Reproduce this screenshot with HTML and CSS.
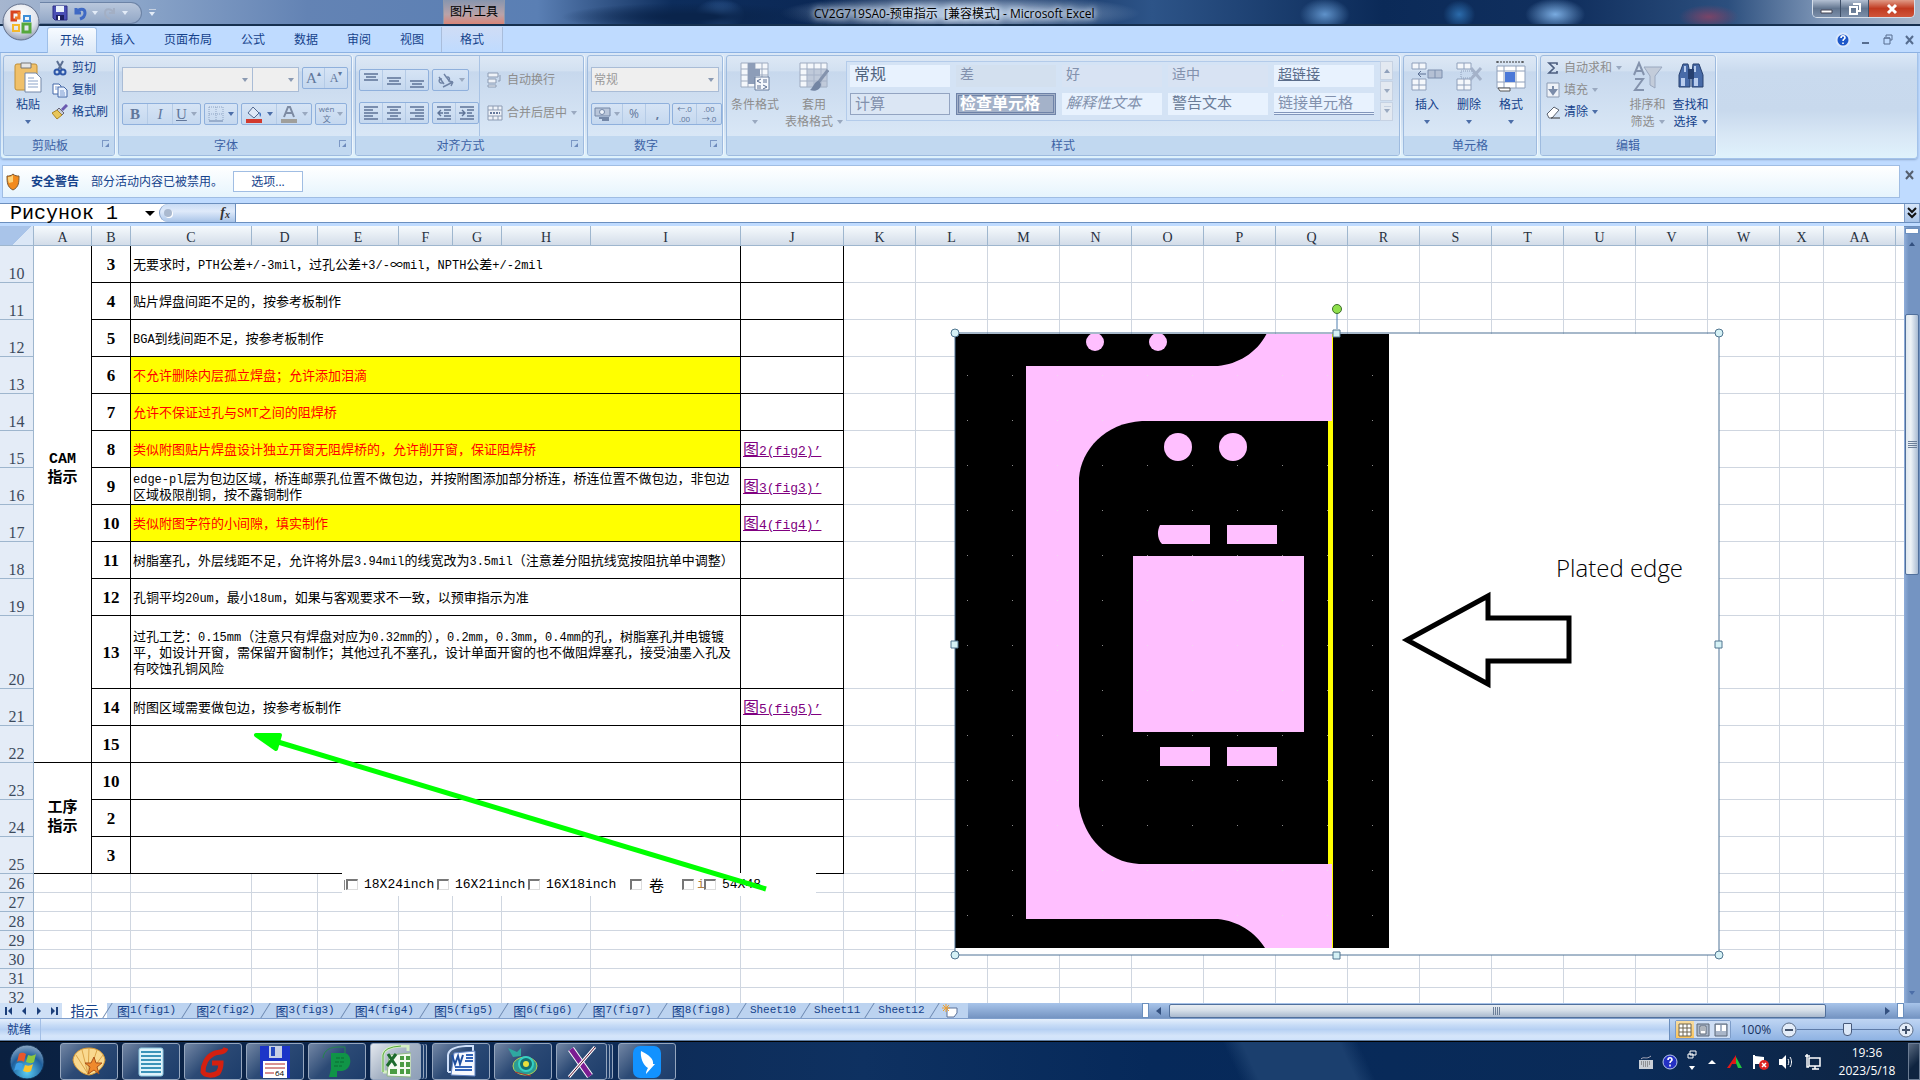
FILE: index.html
```html
<!DOCTYPE html>
<html lang="zh-CN">
<head>
<meta charset="utf-8">
<title>CV2G719SA0-预审指示 [兼容模式] - Microsoft Excel</title>
<link rel="stylesheet" href="styles.css">
</head>
<body>
<header class="titlebar">
  <div class="qat">
    <button aria-label="保存"><svg width="16" height="16"><path d="M1 1h14v14H3l-2-2z" fill="#4a4fb5" stroke="#2c2f86"/><path d="M4 1h8v6H4z" fill="#e8f0fb"/><path d="M4 10h8v5H4z" fill="#1d2060"/><path d="M6 11h2v4H6z" fill="#fff"/></svg></button>
    <button class="undo" aria-label="撤消"><svg width="14" height="16"><path d="M3 3v5h5M3 8c3-5 9-5 9 0 0 3-2 5-5 6" fill="none" stroke="#3f69c4" stroke-width="3"/></svg></button>
    <i class="tri pale"></i>
    <button class="redo" aria-label="恢复" disabled><svg width="14" height="16"><path d="M11 3v5H6M11 8c-3-5-9-5-9 0 0 3 2 5 5 6" fill="none" stroke="#a3afc4" stroke-width="2"/></svg></button>
    <i class="tri pale"></i>
  </div>
  <button class="qat-more" aria-label="自定义"><i class="tri pale bar"></i></button>
  <div class="context-title">图片工具</div>
  <h1>CV2G719SA0-预审指示&nbsp; [兼容模式] - Microsoft Excel</h1>
  <div class="winbtns">
    <button aria-label="最小化"><svg width="14" height="12"><path d="M1 7h11v3H1z" fill="#fff" stroke="#445"/></svg></button><button aria-label="还原"><svg width="14" height="12"><path d="M5 1h7v7h-2M2 4h7v7H2z" fill="none" stroke="#fff" stroke-width="2"/></svg></button><button class="close" aria-label="关闭"><svg width="14" height="12"><path d="M3 2l8 8M11 2l-8 8" stroke="#fff" stroke-width="3"/></svg></button>
  </div>
  <button class="office" aria-label="Office 按钮"><svg width="40" height="40" viewBox="0 0 40 40"><defs><radialGradient id="ob" cx=".5" cy=".3" r=".75"><stop offset="0" stop-color="#fff"/><stop offset=".6" stop-color="#dfe3ec"/><stop offset="1" stop-color="#8793ab"/></radialGradient></defs><circle cx="20" cy="20" r="18" fill="url(#ob)" stroke="#63718d"/><g fill="none" stroke-width="3"><path d="M18 12v-2h-7v8h5" stroke="#d8421e"/><path d="M18 10v6h-4" stroke="#ef7a26"/><path d="M23 14h6v5h-6z" stroke="#3f8fd8" stroke-width="2"/><path d="M12 23h6v6h-6z" stroke="#f5b82a" stroke-width="2"/><path d="M22 22h7v8h-7z" stroke="#55a83c"/></g></svg></button>
</header>

<nav class="tabs">
  <button class="tab on">开始</button><button class="tab">插入</button><button class="tab">页面布局</button><button class="tab">公式</button><button class="tab">数据</button><button class="tab">审阅</button><button class="tab">视图</button><button class="tab ctx">格式</button>
  <div class="docbtns">
    <button aria-label="帮助"><svg width="16" height="16"><circle cx="8" cy="8" r="6.5" fill="#1d57c8" stroke="#d9e7fb" stroke-width="2"/><path d="M6 6c0-3 4-3 4 0 0 1-2 1-2 3M8 10.500v1.500" stroke="#fff" stroke-width="1.600" fill="none"/></svg></button>
    <button aria-label="最小化窗口"><svg width="10" height="12"><path d="M1 9h7" stroke="#566d8f" stroke-width="2"/></svg></button>
    <button aria-label="还原窗口"><svg width="10" height="12"><path d="M3 3V1h6v5H7M1 4h6v6H1zM1 4h6" fill="none" stroke="#566d8f"/></svg></button>
    <button aria-label="关闭窗口"><svg width="10" height="12"><path d="M1 2l7 8M8 2l-7 8" stroke="#566d8f" stroke-width="2"/></svg></button>
  </div>
</nav>

<section class="ribbon">
  <div class="group g-clip">
    <div class="body">
      <button class="big"><svg width="28" height="32"><rect x="1" y="3" width="22" height="26" rx="2" fill="#f0c069" stroke="#c08f36"/><path d="M7 2h10v5H7z" fill="#e6e6e6" stroke="#777"/><path d="M11 12h11l5 5v14H11z" fill="#fff" stroke="#7488a8"/><path d="M14 17h6M14 20h10M14 23h10M14 26h10" stroke="#8ba3c8"/></svg><span>粘贴</span><i class="tri"></i></button>
      <div class="stack">
        <button class="item"><svg width="16" height="16"><path d="M5 1l5 9M11 1L6 10" stroke="#5b6f92" stroke-width="2"/><circle cx="5" cy="12" r="2.500" fill="none" stroke="#2d56a8" stroke-width="2"/><circle cx="11" cy="12" r="2.500" fill="none" stroke="#2d56a8" stroke-width="2"/></svg>剪切</button>
        <button class="item"><svg width="16" height="16"><path d="M1 2h6l2 2v8H1z" fill="#fff" stroke="#4569a8"/><path d="M6 5h6l3 3v7H6z" fill="#e8f1fd" stroke="#4569a8"/><path d="M3 5h3M3 7h3M8 9h4M8 11h5M8 13h5" stroke="#7a9ad0"/></svg>复制</button>
        <button class="item"><svg width="16" height="16"><path d="M15 1l-5 5" stroke="#6a5ab0" stroke-width="3"/><path d="M7 4l5 5-2 2-5-5z" fill="#c6cbd8" stroke="#667"/><path d="M5 6l5 5-5 4-5-6z" fill="#e8c65a" stroke="#a98426"/></svg>格式刷</button>
      </div>
    </div>
    <footer class="has-launch">剪贴板<i class="launch"></i></footer>
  </div>

  <div class="group g-font">
    <div class="body rows">
      <div class="row">
        <div class="combo c-font"><select aria-label="字体" disabled><option></option></select></div><div class="combo c-size"><select aria-label="字号" disabled><option></option></select></div>
        <div class="seg push"><button class="ser">A<sup>▴</sup></button><button class="ser sm">A<sup>▾</sup></button></div>
      </div>
      <div class="row">
        <div class="seg"><button class="ser"><b>B</b></button><button class="ser"><em>I</em></button><button class="ser"><u>U</u><i class="tri dim"></i></button></div>
        <div class="seg"><button aria-label="边框"><svg width="16" height="16"><path d="M1 1h14v14M1 1v14M8 1v14M1 8h14" fill="none" stroke="#8ea4c4" stroke-dasharray="1 1"/><path d="M1 15h14" stroke="#6b82a8"/></svg><i class="tri"></i></button></div>
        <div class="seg"><button aria-label="填充颜色"><svg width="18" height="18"><path d="M8 2l6 6-5 5-6-5z" fill="#dfe9f8" stroke="#53698f"/><path d="M14 7c3 1 2 4 1 5z" fill="#3a6ec0"/><path d="M1 14h16v4H1z" fill="#d23a2e"/></svg><i class="tri"></i></button><button aria-label="字体颜色"><svg width="18" height="18"><path d="M4 12l4-10h2l4 10M6 8h6" fill="none" stroke="#7d8ba3" stroke-width="2"/><path d="M1 14h16v4H1z" fill="#a09f9b"/></svg><i class="tri dim"></i></button></div>
        <div class="seg"><button class="wen"><span>wén<br>文</span><i class="tri dim"></i></button></div>
      </div>
    </div>
    <footer class="has-launch">字体<i class="launch dim"></i></footer>
  </div>

  <div class="group g-align">
    <div class="body">
      <div class="rows">
        <div class="row">
          <div class="seg"><button aria-label="顶端对齐"><svg width="16" height="16"><path d="M1 2h14M3 5h10M1 8h14" stroke="#5e7396" stroke-width="1.500"/></svg></button><button aria-label="垂直居中"><svg width="16" height="16"><path d="M1 6h14M3 9h10M1 12h14" stroke="#5e7396" stroke-width="1.500"/></svg></button><button aria-label="底端对齐"><svg width="16" height="16"><path d="M1 9h14M3 12h10M1 15h14" stroke="#5e7396" stroke-width="1.500"/></svg></button></div>
          <div class="seg"><button class="ori" aria-label="方向"><svg width="18" height="16"><path d="M2 5l5 7M5 7c-4-1-4 5 1 4M7 2l6 8M9 6c3-3 5 2 2 3M6 15l10-5M16 10l-4-1M16 10l-2 4" fill="none" stroke="#6f83a5" stroke-width="1.400"/></svg><i class="tri dim"></i></button></div>
        </div>
        <div class="row">
          <div class="seg"><button aria-label="左对齐"><svg width="16" height="16"><path d="M1 2h14M1 5h9M1 8h14M1 11h9M1 14h14" stroke="#5e7396" stroke-width="1.500"/></svg></button><button aria-label="居中"><svg width="16" height="16"><path d="M1 2h14M4 5h8M1 8h14M4 11h8M1 14h14" stroke="#5e7396" stroke-width="1.500"/></svg></button><button aria-label="右对齐"><svg width="16" height="16"><path d="M1 2h14M6 5h9M1 8h14M6 11h9M1 14h14" stroke="#5e7396" stroke-width="1.500"/></svg></button></div>
          <div class="seg"><button aria-label="减少缩进量"><svg width="16" height="16"><path d="M1 2h14M8 5h7M8 8h5M8 11h7M1 14h14M5 5L2 8l3 3M2 8h5" fill="none" stroke="#5e7396" stroke-width="1.400"/></svg></button><button aria-label="增加缩进量"><svg width="16" height="16"><path d="M1 2h14M8 5h7M8 8h5M8 11h7M1 14h14M3 5l3 3-3 3M0 8h6" fill="none" stroke="#5e7396" stroke-width="1.400"/></svg></button></div>
        </div>
      </div>
      <div class="wrapcol">
        <button class="item off"><svg width="16" height="16"><path d="M1 1h10v4H1zM1 7h8v4H1zM1 13h8v2H1z" fill="#eef2f8" stroke="#8c9bb3"/><path d="M13 3v6h-2" fill="none" stroke="#8c9bb3"/></svg>自动换行</button>
        <button class="item off"><svg width="16" height="16"><path d="M1 1h14v14H1zM1 5h14M1 11h14M6 1v4M11 1v4M6 11v4M11 11v4" fill="#eef2f8" stroke="#8c9bb3"/><path d="M3 8h10" stroke="#66799c" stroke-width="2" stroke-dasharray="2 1"/></svg>合并后居中<i class="tri dim"></i></button>
      </div>
    </div>
    <footer class="has-launch">对齐方式<i class="launch dim"></i></footer>
  </div>

  <div class="group g-num">
    <div class="body rows">
      <div class="row"><div class="combo c-fmt"><select aria-label="数字格式" disabled><option>常规</option></select></div></div>
      <div class="row">
        <div class="seg"><button aria-label="会计数字格式"><svg width="18" height="16"><path d="M1 2h15v8H1z" fill="#b9c6da" stroke="#7488a8"/><circle cx="8" cy="6" r="2.500" fill="#eef3fa" stroke="#7488a8"/><path d="M5 12h10M8 14h7" stroke="#7488a8" stroke-width="2"/></svg><i class="tri dim"></i></button><button>%</button><button><b>,</b></button></div>
        <div class="seg tiny"><button>←.0<br>.00</button><button>.00<br>→.0</button></div>
      </div>
    </div>
    <footer class="has-launch">数字<i class="launch dim"></i></footer>
  </div>

  <div class="group g-style">
    <div class="body">
      <button class="big off"><svg width="30" height="32"><path d="M1 2h27v24H1zM1 8h27M1 14h27M1 20h27M8 2v24M15 2v24M22 2v24" fill="#f4f7fb" stroke="#9eabc0"/><path d="M8 2h7v6h5v7h-5v8H8z" fill="#8d9db8"/><path d="M15 16h14v13H15z" fill="#f6f8fc" stroke="#6b7e9e"/><path d="M21 18l-4 2 4 2M23 19h4M23 21h4M17 25h4M17 27h4M23 24l4 2-4 2" fill="none" stroke="#5b6f92"/></svg><span>条件格式</span><i class="tri dim"></i></button>
      <button class="big off"><svg width="30" height="32"><path d="M1 2h27v24H1zM1 8h27M1 14h27M1 20h27M8 2v24M15 2v24M22 2v24" fill="#f4f7fb" stroke="#9eabc0"/><path d="M8 8h20v18H8z" fill="#aab7cc" opacity=".7"/><path d="M29 9L19 22" stroke="#8493ad" stroke-width="3"/><path d="M20 20c-5 0-5 6-9 9 5 2 11 0 11-6z" fill="#7385a3"/></svg><span>套用<br>表格格式<i class="tri dim"></i></span></button>
      <div class="gallery">
        <button class="sty s-normal">常规</button><button class="sty s-bad">差</button><button class="sty s-good">好</button><button class="sty s-neutral">适中</button><button class="sty s-link">超链接</button>
        <button class="sty s-calc">计算</button><button class="sty s-check">检查单元格</button><button class="sty s-note">解释性文本</button><button class="sty s-warn">警告文本</button><button class="sty s-linked">链接单元格</button>
      </div>
      <div class="galbtns"><button aria-label="上一行"><i class="tri up dim"></i></button><button aria-label="下一行"><i class="tri dim"></i></button><button aria-label="其他"><i class="tri bar dim"></i></button></div>
    </div>
    <footer>样式</footer>
  </div>

  <div class="group g-cells">
    <div class="body">
      <button class="big"><svg width="32" height="32"><path d="M1 2h14v6H1zM8 2v6M1 18h14v11H1zM8 18v11M1 24h14" fill="#f4f7fb" stroke="#8fa0bb"/><path d="M17 9h14v8H17zM24 9v8" fill="#b4c0d4" stroke="#7d8fae"/><path d="M15 13H7M10 10l-3 3 3 3" fill="none" stroke="#5b6f92"/></svg><span>插入</span><i class="tri"></i></button>
      <button class="big"><svg width="32" height="32"><path d="M4 2h14v6H4zM11 2v6M4 18h14v11H4zM11 18v11M4 24h14" fill="#f4f7fb" stroke="#8fa0bb"/><path d="M8 10h12v7H8z" fill="none" stroke="#8fa0bb" stroke-dasharray="1 1"/><path d="M18 7l10 12M28 7L17 19" stroke="#a4b2c9" stroke-width="3"/></svg><span>删除</span><i class="tri"></i></button>
      <button class="big"><svg width="32" height="32"><path d="M2 1h26M2 0v3M28 0v3" stroke="#333" stroke-dasharray="2 1"/><path d="M2 5h28v22H2zM2 10h28M2 21h28M9 5v22M21 5v22" fill="#fff" stroke="#8fa0bb"/><path d="M10 11h10v10H10z" fill="#4a78d8"/><path d="M3 27h12v3H5z" fill="#fff" stroke="#555"/></svg><span>格式</span><i class="tri"></i></button>
    </div>
    <footer>单元格</footer>
  </div>

  <div class="group g-edit">
    <div class="body">
      <div class="stack">
        <button class="item off"><svg width="14" height="16"><path d="M11 5V3H3l5 5-5 5h8v-2" fill="none" stroke="#4d5f80" stroke-width="1.700"/></svg>自动求和<i class="tri dim"></i></button>
        <button class="item off"><svg width="14" height="16"><path d="M1 1h12v14H1z" fill="#eef2f8" stroke="#8c9bb3"/><path d="M7 4v6M4 8l3 4 3-4z" fill="#7b8ca9" stroke="#7b8ca9" stroke-width="2"/></svg>填充<i class="tri dim"></i></button>
        <button class="item"><svg width="14" height="16"><path d="M1 10l7-7 5 3-7 8H3z" fill="#fff" stroke="#5a6270"/><path d="M5 14h9" stroke="#333"/></svg>清除<i class="tri"></i></button>
      </div>
      <button class="big off"><svg width="30" height="32"><path d="M1 14L6 2l5 12M3 10h7M2 18h8L2 29h9" fill="none" stroke="#8493ad" stroke-width="2"/><path d="M11 6h18l-7 9v12l-5-3v-9z" fill="#c3ccda" stroke="#9aa8bf"/></svg><span>排序和<br>筛选<i class="tri dim"></i></span></button>
      <button class="big"><svg width="30" height="32"><path d="M7 3h5l2 9v14H3V14zM17 3h6l4 11v12H16V12z" fill="#486ba8" stroke="#27406f"/><path d="M12 8h6v10h-6z" fill="#27406f"/><path d="M5 17h4v8H5zM18 17h4v8h-4zM8 5h2v6H8zM18 5h2v6h-2z" fill="#b9cdee"/></svg><span>查找和<br>选择<i class="tri"></i></span></button>
    </div>
    <footer>编辑</footer>
  </div>
</section>

<section class="warning">
  <div class="msg"><svg width="14" height="18"><path d="M7 1c2 2 4 2 6 2 0 6 0 11-6 14C1 14 1 9 1 3c2 0 4 0 6-2z" fill="#f28a1c" stroke="#7b5a35"/><path d="M7 2C5 4 3 4 2 4c0 2 0 4 1 6l4-1z" fill="#fbd27a"/></svg><strong>安全警告</strong><span>部分活动内容已被禁用。</span><button>选项...</button></div>
  <button class="dismiss" aria-label="关闭消息"><svg width="10" height="12"><path d="M1 2l7 8M8 2l-7 8" stroke="#56606f" stroke-width="2"/></svg></button>
</section>

<section class="formula">
  <input class="name" aria-label="名称框" value="Рисунок 1"><i class="tri black"></i>
  <div class="pill"><i class="knob"></i><button class="fx" aria-label="插入函数">f<sub>x</sub></button></div>
  <input class="fbar" aria-label="编辑栏">
  <button class="expand" aria-label="展开编辑栏"><svg width="10" height="14"><path d="M1 2l4 4 4-4M1 7l4 4 4-4" fill="none" stroke="#111" stroke-width="2"/></svg></button>
</section>

<main class="workspace">
  <div class="sheet">
    <table class="grid"><colgroup id="cols"></colgroup><thead><tr id="heads"></tr></thead><tbody id="rows"></tbody></table>
    <div class="options">
      <label><input type="checkbox">18X24inch</label><label><input type="checkbox">16X21inch</label><label><input type="checkbox">16X18inch</label><label><input type="checkbox"><b class="han">卷</b></label><label class="cut"><input type="checkbox">i</label><label><input type="checkbox">54X48</label>
    </div>
    <svg class="drawing">
      <defs>
        <pattern id="dots" x="967" y="375" width="45" height="45" patternUnits="userSpaceOnUse"><rect width="1" height="1" fill="#e8e8e8" opacity=".6"/></pattern>
        <clipPath id="pic"><rect x="955" y="334" width="434" height="614"/></clipPath>
      </defs>
      <g transform="translate(0 -226)">
        <path d="M278 742L766 889" stroke="#0f0" stroke-width="5"/><path d="M256 735h24l-4 14z" fill="#0f0" stroke="#0f0" stroke-width="4" stroke-linejoin="round"/>
        <rect x="955" y="334" width="764" height="621" fill="#fff"/>
        <g clip-path="url(#pic)">
          <rect x="955" y="334" width="434" height="614" fill="#000"/>
          <path d="M1026 366H1218C1238 364 1257 353 1267 333H1333V948H1265C1255 932 1238 921 1218 919H1026z" fill="#ffbfff"/>
          <path d="M1328 421H1142C1105 423 1081 450 1079 478V806C1084 838 1107 862 1139 864H1328z" fill="#000"/>
          <path d="M1328 421h5v443h-5zM1332 334h1v614h-1z" fill="#ff0"/>
          <g fill="#ffbfff"><circle cx="1095" cy="342" r="9"/><circle cx="1158" cy="342" r="9"/><circle cx="1178" cy="447" r="14"/><circle cx="1233" cy="447" r="14"/>
          <path d="M1160 525h50v19h-48c-5-5-5-13-2-19zM1227 525h50v19h-50zM1133 556h171v176h-171zM1160 747h50v19h-50zM1227 747h50v19h-50z"/></g>
          <rect x="955" y="370" width="434" height="560" fill="url(#dots)"/>
        </g>
        <path d="M1407 640L1488 596V618H1569V661H1488V684z" fill="#fff" stroke="#000" stroke-width="5"/>
        <text x="1556" y="577">Plated edge</text>
        <rect x="955" y="333" width="764" height="622" fill="none" stroke="#4f7396"/>
        <path d="M1337 313v16" stroke="#4f7fb0"/>
        <g fill="#d5f1f5" stroke="#50758f"><circle cx="955" cy="333" r="4"/><circle cx="1719" cy="333" r="4"/><circle cx="955" cy="955" r="4"/><circle cx="1719" cy="955" r="4"/><path d="M1333 330h7v7h-7zM1333 952h7v7h-7zM951 641h7v7h-7zM1715 641h7v7h-7z"/></g>
        <circle cx="1337" cy="309" r="4.500" fill="#8fe04c" stroke="#3f6f2c"/>
      </g>
    </svg>
  </div>
  <div class="vscroll"><i class="split"></i><button aria-label="向上"><i class="tri up"></i></button><div class="thumb"><i></i></div><button class="end" aria-label="向下"><i class="tri"></i></button></div>
</main>

<section class="sheettabs">
  <div class="nav"><button aria-label="第一张"><svg width="8" height="10"><path d="M1 1v8" stroke="#1c3f7a" stroke-width="2"/><path d="M7 1v8L3 5z" fill="#1c3f7a"/></svg></button><button aria-label="上一张"><svg width="8" height="10"><path d="M6 1v8L2 5z" fill="#1c3f7a"/></svg></button><button aria-label="下一张"><svg width="8" height="10"><path d="M2 1v8l4-4z" fill="#1c3f7a"/></svg></button><button aria-label="最后一张"><svg width="8" height="10"><path d="M7 1v8" stroke="#1c3f7a" stroke-width="2"/><path d="M1 1v8l4-4z" fill="#1c3f7a"/></svg></button></div>
  <button class="st on">指示</button><button class="st"><span class="han">图</span>1(fig1)</button><button class="st"><span class="han">图</span>2(fig2)</button><button class="st"><span class="han">图</span>3(fig3)</button><button class="st"><span class="han">图</span>4(fig4)</button><button class="st"><span class="han">图</span>5(fig5)</button><button class="st"><span class="han">图</span>6(fig6)</button><button class="st"><span class="han">图</span>7(fig7)</button><button class="st"><span class="han">图</span>8(fig8)</button><button class="st w">Sheet10</button><button class="st w">Sheet11</button><button class="st w">Sheet12</button><button class="st new" aria-label="插入工作表"><svg width="18" height="14"><path d="M5 4h10v5l-3 4H5z" fill="#fff" stroke="#5a7199"/><path d="M4 0v8M0 4h8M1 1l6 6M7 1L1 7" stroke="#f0a030"/></svg></button>
  <div class="hscroll"><i class="split"></i><button aria-label="向左"><i class="tri left"></i></button><div class="thumb"><i></i></div><button class="end" aria-label="向右"><i class="tri right"></i></button><i class="split"></i></div>
</section>

<section class="status">
  <span class="ready">就绪</span>
  <div class="viewbar">
    <div class="views"><button class="on" aria-label="普通"><svg width="14" height="14"><path d="M1 1h12v12H1zM1 5h12M1 9h12M5 1v12M9 1v12" fill="#fff" stroke="#6c6450"/></svg></button><button aria-label="页面布局"><svg width="14" height="14"><path d="M1 1h12v12H1z" fill="#a9b6c9" stroke="#5d6879"/><path d="M4 3h6v8H4z" fill="#fff" stroke="#5d6879"/><path d="M5 5h4M5 7h4" stroke="#5d6879"/></svg></button><button aria-label="分页预览"><svg width="14" height="14"><path d="M1 1h12v12H1z" fill="#a9b6c9" stroke="#5d6879"/><path d="M2 2h4v6H2zM8 2h4v6H8z" fill="#fff"/></svg></button></div>
    <span class="pct">100%</span>
    <button class="zb" aria-label="缩小"><svg width="16" height="16"><circle cx="8" cy="8" r="7" fill="#e3ecf8" stroke="#5b6c86"/><path d="M4 8h8" stroke="#44546d" stroke-width="2"/></svg></button>
    <input type="range" aria-label="显示比例" min="0" max="100" value="50">
    <button class="zb" aria-label="放大"><svg width="16" height="16"><circle cx="8" cy="8" r="7" fill="#e3ecf8" stroke="#5b6c86"/><path d="M4 8h8M8 4v8" stroke="#44546d" stroke-width="2"/></svg></button>
  </div>
</section>

<footer class="taskbar">
  <button class="start" aria-label="开始菜单"><svg width="40" height="38" viewBox="0 0 40 38"><defs><radialGradient id="sb" cx=".5" cy=".8" r=".8"><stop offset="0" stop-color="#5ad0f5"/><stop offset=".6" stop-color="#1f5f9c"/><stop offset="1" stop-color="#8fa9c4"/></radialGradient></defs><circle cx="20" cy="19" r="17" fill="url(#sb)" stroke="#0d2c4f"/><path d="M12 11c3-2 5-1 7 0l-2 8c-2-1-4-2-7 0z" fill="#e8572a"/><path d="M21 12c3 1 5 1 8-1l-2 8c-3 2-5 1-8 0z" fill="#8cc63f"/><path d="M9 21c3-2 5-1 7 0l-2 7c-2-1-4-2-7 0z" fill="#3fa0e8"/><path d="M18 22c3 1 5 1 8-1l-2 7c-3 2-5 1-8 0z" fill="#fbc52d"/></svg></button>
  <button class="app" aria-label="贝壳"><svg width="34" height="30"><path d="M17 28C9 27 2 20 1 13 2 5 9 1 17 1s15 4 16 12c-1 7-8 14-16 15z" fill="#f9d98f" stroke="#d99a35"/><path d="M16 27L4 8M16 27L10 3M16 27L17 1M17 27L25 3M17 27L31 8" stroke="#dca64a"/><path d="M22 10l2 6 6 0-5 4 2 7-5-4-6 4 2-7-5-4h6z" fill="#ef8a2c" stroke="#a8521a"/></svg></button>
  <button class="app" aria-label="记事本"><svg width="26" height="30"><rect x="1" y="1" width="24" height="28" rx="2" fill="#dff3fb" stroke="#8cc8e0"/><path d="M3 5h20M3 9h20M3 13h20M3 17h20M3 21h20M3 25h20" stroke="#3c93b8" stroke-width="2"/></svg></button>
  <button class="app" aria-label="G"><svg width="30" height="32"><path d="M28 2c-2 6-8 3-13 6-6 3-10 10-10 18 2 4 10 4 15 1 2-3 3-7 3-10h-9" fill="none" stroke="#d42010" stroke-width="5"/></svg></button>
  <button class="app" aria-label="磁盘"><svg width="30" height="34"><path d="M0 1h30v32H3l-3-3z" fill="#1c35c8"/><path d="M9 1h13v12H9z" fill="#c7d0e4"/><path d="M11 2h4v9h-4z" fill="#2448c0"/><path d="M3 16h24v17H3z" fill="#fff"/><path d="M5 19h20M5 23h20M5 28h9" stroke="#b02525"/><text x="15" y="31" font-size="8">64</text></svg></button>
  <button class="app" aria-label="P"><svg width="30" height="32"><path d="M1 12C2 4 8 1 17 1h6v6" fill="none" stroke="#23864b"/><path d="M9 7h14c8 2 7 17-3 18h-5v6H7l2-8z" fill="#109447"/><path d="M14 12h8M13 16h9M12 20h8" stroke="#0a6b33" stroke-dasharray="4 1"/></svg></button>
  <button class="app multi active" aria-label="Excel"><svg width="30" height="34"><path d="M2 27V10Q3 2 20 1h7v5M2 27h6" fill="none" stroke="#d4efc4" stroke-width="3"/><path d="M2 27V10Q3 2 20 1" fill="none" stroke="#57a83c"/><path d="M8 10l22-2v24L6 31z" fill="#f4faf0" stroke="#8fb884"/><path d="M19 11h4v4h-4zM25 11h4v4h-4zM19 17h4v5h-4zM25 17h4v5h-4zM9 24h7v5H9zM19 24h4v5h-4zM25 24h4v5h-4z" fill="#4b9c43"/><path d="M7 9l8 12M15 9L6 21" stroke="#1d6b2c" stroke-width="3"/></svg></button>
  <button class="app" aria-label="Word"><svg width="30" height="34"><path d="M2 27V10Q3 2 20 1h7v5M2 27h6" fill="none" stroke="#cfe0fa" stroke-width="2"/><path d="M8 8l21-2v25L5 30z" fill="#f6f9ff" stroke="#5f83c4"/><path d="M6 10l3 9 3-8 2 8 3-9" fill="none" stroke="#1f4f9f" stroke-width="2"/><path d="M20 10h7M20 13h7M19 16h8M9 22h17M9 25h17" stroke="#3264b8" stroke-width="2"/></svg></button>
  <button class="app" aria-label="CAM"><svg width="32" height="32"><ellipse cx="18" cy="20" rx="12" ry="9" fill="#2b9c94" stroke="#b8d050"/><circle cx="19" cy="18" r="7" fill="#156f70" stroke="#35d0c4" stroke-width="2"/><circle cx="19" cy="18" r="3" fill="#e9e03c"/><path d="M1 2l9 4 4-4v8l-8 1z" fill="#2fa8a0"/><path d="M8 26l16 4" stroke="#a33"/></svg></button>
  <button class="app multi" aria-label="X"><svg width="32" height="34"><path d="M5 4l19 27" stroke="#fff" stroke-width="7"/><path d="M5 4l19 27" stroke="#7b1d92" stroke-width="5"/><path d="M29 2L3 32" stroke="#fff" stroke-width="3"/><path d="M29 2L3 32" stroke="#5b1330"/></svg></button>
  <button class="app" aria-label="鸟"><svg width="28" height="32"><rect width="28" height="32" rx="7" fill="#1292ff"/><path d="M8 5c8 4 13 8 12 13h2l-9 10c0-3 1-4 2-6-5-3-8-11-7-17z" fill="#fff"/></svg></button>
  <div class="tray">
    <svg width="16" height="16"><path d="M1 6h14v9H1z" fill="#c9ced6"/><path d="M3 8h10M3 10h10M5 12h6" stroke="#555" stroke-dasharray="1 1"/><path d="M3 5c3-3 5 1 10-3" fill="none" stroke="#aab"/></svg>
    <svg width="16" height="16"><circle cx="8" cy="8" r="7" fill="#2430c4" stroke="#b9c6ef"/><path d="M6 6c0-3 4-3 4 0 0 1-2 1-2 3M8 10.500v2" stroke="#fff" stroke-width="1.600" fill="none"/></svg>
    <svg width="12" height="26"><path d="M4 2h6v4H4zM2 5h5v4H2z" fill="none" stroke="#fff"/><path d="M3 17h6l-3 4z" fill="#fff"/></svg>
    <svg width="12" height="10"><path d="M2 7h8L6 3z" fill="#fff"/></svg>
    <svg width="18" height="16"><path d="M1 14L10 1v9H6l-2 4z" fill="#e01818"/><path d="M10 3l6 11h-4l-2-5z" fill="#22c83c"/></svg>
    <svg width="18" height="18"><path d="M2 2v14" stroke="#fff" stroke-width="2"/><path d="M3 3l9 1v7H3z" fill="#fff"/><circle cx="12" cy="12" r="5" fill="#d22"/><path d="M10 10l4 4M14 10l-4 4" stroke="#fff" stroke-width="1.500"/></svg>
    <svg width="18" height="18"><path d="M1 6h3l4-4v14l-4-4H1z" fill="#fff"/><path d="M10 6c1 2 1 4 0 6M12 4c2 3 2 7 0 10" fill="none" stroke="#fff"/></svg>
    <svg width="18" height="18"><path d="M5 5h11v8H5zM8 16h7M11 13v3M3 1v5M1 3h5M3 6v8h2" fill="none" stroke="#fff" stroke-width="1.500"/></svg>
    <time>19:36<br>2023/5/18</time>
  </div>
  <button class="peek" aria-label="显示桌面"></button>
</footer>
<script src="sheet.js"></script>
</body>
</html>
```
FILE: styles.css
```css
*{box-sizing:border-box}
body{margin:0;height:100vh;display:flex;flex-direction:column;overflow:hidden;background:#bfdbff;font:12px/16px "Open Sans","Noto Sans CJK SC",sans-serif;color:#15428b}
button,input,select{font:inherit;color:inherit;margin:0;padding:0;border:0;background:none;border-radius:0}
button{display:flex;align-items:center;justify-content:center;white-space:nowrap}
svg{display:block;flex:none}
h1{margin:0}
.tri{display:inline-block;flex:none;width:0;height:0;border:3px solid transparent;border-top:4px solid #4c6ea8;border-bottom:0}
.tri.dim{border-top-color:#9aa9c0}
.tri.pale{border-top-color:#e3ecf8}
.tri.black{border-width:5px 5px 0;border-top-color:#000}
.tri.up{border-top:0;border-bottom:4px solid #33507f}
.tri.up.dim{border-bottom-color:#8fa0bb}
.tri.left{border:4px solid transparent;border-right:5px solid #33507f;border-left:0}
.tri.right{border:4px solid transparent;border-left:5px solid #33507f;border-right:0}
.bar{position:relative}
.bar::before{content:"";position:absolute;left:-3px;top:-7px;width:7px;height:1px;background:#c5d0e0}

/* title bar */
.titlebar{flex:none;position:relative;height:26px;display:flex;align-items:flex-start;padding:0 5px 0 40px;border-bottom:2px solid #16304f;background:
 radial-gradient(ellipse 130px 14px at 36% 70%,#0a244b 20%,transparent),
 radial-gradient(ellipse 25px 16px at 37.500% 60%,#3f6fae,transparent),
 radial-gradient(ellipse 180px 20px at 50% 55%,#a9bfdb 20%,transparent),
 radial-gradient(ellipse 25px 16px at 69% 60%,#5f92ca,transparent),
 radial-gradient(ellipse 16px 14px at 76% 60%,#2b6bab,transparent),
 radial-gradient(ellipse 30px 16px at 81% 60%,#79abe0,transparent),
 radial-gradient(ellipse 30px 12px at 89% 70%,#7a4468,transparent),
 linear-gradient(90deg,#a6b6cf 0,#8ba5c9 7%,#6383b4 16%,#5a7fb4 28%,#0d2d5c 35%,#0a2450 50%,#2d5488 60%,#0b2a58 72%,#11305f 82%,#2c4f7e 90%,#7f97b8 95%,#a5b5ca)}
.qat{height:22px;width:102px;margin-top:2px;padding-left:12px;display:flex;align-items:center;gap:5px;border:1px solid #6c83a6;border-left:0;border-radius:0 11px 11px 0;background:linear-gradient(#b9c7dc,#92a7c6)}
.qat-more{margin:12px 0 0 7px}
.context-title{width:62px;height:24px;margin-left:288px;padding-top:4px;text-align:center;color:#000;background:linear-gradient(#8795ae,#b9a3a9 60%,#d98578);border:1px solid #8f98aa;border-width:0 1px}
.titlebar h1{flex:1;font-size:12px;line-height:16px;font-weight:400;color:#000;padding:6px 0 0 302px;margin-left:7px;white-space:nowrap;text-shadow:0 0 5px #e3ecf7,0 0 7px #d7e3f2,0 0 9px #d7e3f2}
.winbtns{display:flex;border:1px solid #d5deea;border-top:0;border-radius:0 0 5px 5px;overflow:hidden}
.winbtns button{width:28px;height:17px;background:linear-gradient(#b3c0d3,#62758f 50%,#7b8ea9);border-right:1px solid #3e4f68}
.winbtns .close{width:45px;border:0;background:linear-gradient(#e09a86,#c13a20 50%,#d0553a)}
.office{position:absolute;left:1px;top:2px;z-index:2}

/* ribbon tabs */
.tabs{flex:none;height:27px;display:flex;align-items:stretch;padding:1px 5px 0 47px;background:#bfdbff;border-bottom:1px solid #8db2e3}
.tab{padding:0 14px;line-height:24px}
.tab:not(.on){margin-right:1px}
.tab.on{padding:0 12px;margin-bottom:-1px;background:linear-gradient(#f7fbff,#dbe8f7);border:1px solid #9ebfe8;border-bottom:0;border-radius:3px 3px 0 0}
.tab.ctx{width:62px;padding:0;margin-left:2px;border:1px solid #a9bddb;border-width:0 1px;background:linear-gradient(#cfdcf5,#bfdbff)}
.docbtns{margin-left:auto;display:flex;align-items:center;gap:12px}
.docbtns button:first-child{margin-right:-2px}

/* ribbon */
.ribbon{flex:none;height:106px;margin:0 2px 0 0;padding:2px 2px;display:flex;gap:3px;border:1px solid #a3c3ea;border-top:0;border-radius:0 0 4px 4px;background:linear-gradient(#dbe8f7,#c9daee 18%,#c8d9ed 55%,#d9e8f6 80%,#dff2fc);box-shadow:0 1px 2px #8da9cf}
.group{flex:none;height:101px;display:flex;flex-direction:column;border:1px solid #9ebbdf;border-radius:3px;background:linear-gradient(#dde8f5,#d2e0f1 15%,#c7d8ed 16%,#d9e7f6 80%);overflow:hidden;box-shadow:1px 0 0 #eff6fd}
.group .body{flex:1;display:flex;min-height:0}
.group footer{height:19px;position:relative;background:#c1d8f0;text-align:center;line-height:19px;color:#3c62a5}
.group .has-launch{padding-right:18px}
.launch{position:absolute;right:5px;top:4px;width:7px;height:7px;border:1px solid #7c98c5;border-width:1px 0 0 1px}
.launch::after{content:"";position:absolute;right:0;bottom:0;border:2px solid #6d8abb;border-top-color:transparent;border-left-color:transparent}
.g-clip{width:112px}.g-font{width:234px}.g-align{width:229px}.g-num{width:136px}.g-style{width:674px}.g-cells{width:134px}.g-edit{width:176px}
.big{flex-direction:column;justify-content:flex-start;padding-top:5px;line-height:17px}
.big svg{margin-bottom:3px}
.big>.tri{margin-top:7px}
.big span .tri{margin-left:4px;vertical-align:2px}
.off{color:#8d8d8d}
.g-clip .big{width:48px}
.stack{display:flex;flex-direction:column;gap:6px;padding-top:4px;align-items:flex-start}
.item{gap:4px;height:16px}
.rows{display:flex;flex-direction:column;gap:11px;padding:11px 3px 0 3px}
.rows.body{gap:11px}
.row{display:flex;gap:3px;height:25px}
.row+.row{height:22px}
.combo{position:relative;height:25px;border:1px solid #a9bcd6;background:#efefef}
.combo::after{content:"";position:absolute;right:4px;top:10px;border:3px solid transparent;border-top:4px solid #8b9ab2;border-bottom:0}
.combo select{width:100%;height:100%;appearance:none;opacity:1;color:#9a9a9a;padding-left:2px}
.c-font{width:131px}.c-size{width:47px;margin-left:-4px}.c-fmt{width:128px}
.seg{height:22px;display:flex;border:1px solid #8fb0dc;border-radius:2px;background:linear-gradient(#d6e4f5,#c5d8ef)}
.seg button{padding:0 3px;gap:4px;border-right:1px solid #b5cbe6;min-width:22px;color:#61779b}
.seg button:last-child{border-right:0}
.push{margin-left:auto}
.ser{font-family:"Liberation Serif",serif;font-size:15px}
.ser sup{font-size:8px;line-height:8px;margin:-8px 0 0 -4px}
.seg .ser.sm{font-size:12px}
.seg .wen{font-size:8px;line-height:10px;gap:3px}
.g-font .row+.row .seg:first-child button{min-width:25px}
.g-align .rows{width:124px;padding-top:13px;border-right:1px solid #a9c3e4}
.g-align .row,.g-align .row+.row{height:22px}
.g-align .seg button{padding:0 3px}
.g-align .seg .ori{width:35px}
.wrapcol{display:flex;flex-direction:column;gap:17px;padding:16px 0 0 7px;align-items:flex-start}
.g-num .row{gap:2px}
.g-num .seg button:not(:first-child){min-width:23px;padding:0}
.g-num .seg:first-child button:first-child{padding:0 2px;gap:2px}
.g-num .tiny button,.g-num .tiny button:not(:first-child){width:24px;min-width:0;padding:0}
.tiny{font-size:8px;line-height:10px}
.g-style .big{width:56px}
.g-style .big+.big{width:62px}
.gallery{width:534px;height:60px;margin:5px 0 0 1px;padding:3px;display:grid;grid-template-columns:repeat(5,100px);grid-auto-rows:22px;gap:6px;border:1px solid #b3cbea;border-right:0;background:#d4e3f5}
.sty{justify-content:flex-start;align-items:flex-start;padding-left:4px;font-size:15px;line-height:18px;background:#e8f2fe;color:#8291ad}
.s-normal{color:#51647f;font-size:16px}
.s-bad,.s-good{background:#d3e0ef}.s-neutral,.s-good{background:#d8e3f3}
.s-bad,.s-good,.s-neutral{font-size:14px}
.s-link{text-decoration:underline;color:#5b6d8b;font-size:14px}
.s-calc{border:1px solid #93a4c1;background:#dbe6f4}
.s-check{border:3px double #6f83a8;background:#a4b2c9;color:#fff;font-weight:700;font-size:16px;line-height:14px;padding-left:1px}
.s-note{font-style:italic}
.s-warn{color:#6a7c98}
.s-linked{border-bottom:3px double #8296bb}
.galbtns{width:13px;margin-top:5px;height:60px;display:flex;flex-direction:column;gap:1px}
.galbtns button{flex:1;background:#e3e9f1;border:1px solid #c6d2e3}
.g-cells .big{width:42px}
.g-cells .body{padding-left:2px}
.g-edit .body{padding-left:5px}
.g-edit .stack{width:80px}
.g-edit .big{width:43px}

/* message bar */
.warning{flex:none;height:33px;margin-top:6px;display:flex;padding-left:2px}
.msg{flex:1;display:flex;align-items:center;padding-left:3px;border:1px solid #a0bde3;background:linear-gradient(#fff,#e6f4fd)}
.msg strong{margin:0 12px 0 11px}
.msg button{width:70px;height:21px;margin-left:10px;border:1px solid #a0bde3;background:#fff}
.dismiss{width:20px;height:20px}

/* formula bar */
.formula{flex:none;height:20px;margin:5px 0 3px;display:flex;align-items:center;border:1px solid #6b8fbe;border-width:1px 0;background:#fff;color:#000}
.name{width:136px;padding-left:10px;margin-right:9px;font:20px/18px "Liberation Mono",monospace}
.pill{width:77px;height:18px;margin-left:4px;display:flex;justify-content:space-between;align-items:center;padding:0 5px 0 4px;border-radius:9px 0 0 9px;border-right:1px solid #6b8fbe;border-left:1px solid #7f9cc6;background:linear-gradient(#c9dcf5,#dfeafa 40%,#a9c4e8)}
.knob{width:8px;height:8px;border-radius:4px;background:#aab9cf;box-shadow:1px 1px 0 #fff}
.fx{font:italic bold 14px/16px "Liberation Serif",serif;color:#333}
.fx sub{font-size:10px;line-height:8px;margin-top:4px}
.fbar{flex:1;height:18px}
.expand{width:16px;height:18px;background:linear-gradient(#d7e6fa,#a9c4e8);border:1px solid #7f9cc6;border-width:0 1px}

/* worksheet */
.workspace{flex:1;min-height:0;display:flex;border-top:1px solid #6b8fbe;background:#fff}
.sheet{flex:1;min-width:0;position:relative;overflow:hidden;margin-top:-1px}
.grid{table-layout:fixed;width:1px;border-collapse:separate;border-spacing:0;font:16px/18px "Liberation Serif","Noto Sans CJK SC",serif;color:#000}
.grid th,.grid td{padding:0;border:solid #cfd6e0;border-width:0 1px 1px 0;overflow:hidden}
.grid thead th{height:20px;padding-top:4px;font-weight:400;font-size:14px;line-height:14px;color:#27313f;background:linear-gradient(#f6fafd,#d3dde9);border-color:#9eb6ce}
.grid thead .corner{background:linear-gradient(135deg,#a9c4e9 60%,#dbe7f6 60%)}
.grid tbody th{font-weight:400;color:#3c4a5c;vertical-align:bottom;line-height:16px;background:#e4ecf7;border-color:#9eb6ce}
.grid .side{font:bold 15px/19px "Liberation Mono","Noto Sans CJK SC",monospace;text-align:center;border-color:#000}
.grid .side.cam{padding-bottom:70px}
.grid .no{padding-top:2px;font-weight:700;font-size:17px;text-align:center;border-color:#000}
.grid .txt{padding-left:2px;font:13px/16px "Noto Sans CJK SC",sans-serif;border-color:#000;white-space:nowrap}
.lat{font:12px/10px "Liberation Mono",monospace}
.grid .hot{background:#ff0;color:#f00}
.grid .ref{padding:2px 0 0 2px;border-color:#000}
.grid .ref a{font:13px/18px "Liberation Mono",monospace;color:#800080}
.han{font-family:"Noto Sans CJK SC",sans-serif;font-weight:400}
.ref .han{font-size:16px}
.options{position:absolute;left:342px;top:647px;width:474px;height:23px;padding-left:4px;display:grid;grid-template-columns:91px 91px 102px 52px 22px 1fr;align-items:center;background:#fff;color:#000;font:13px/22px "Liberation Mono",monospace}
.options::before{content:"";position:absolute;left:2px;top:7px;width:1px;height:10px;background:#888}
.options label{display:flex;align-items:center;gap:6px;white-space:nowrap}
.options input{appearance:none;flex:none;width:12px;height:11px;border:1px solid #ddd;border-top:2px solid #777;border-left:2px solid #777;background:#fff}
.options .cut{color:#b08040;gap:3px}
.options .han{font-size:15px;margin-left:1px}
.drawing{position:absolute;left:0;top:0;width:100%;height:100%}
.drawing text{font:24px "Open Sans",sans-serif;font-weight:300;fill:#000}

/* scroll bars */
.vscroll{flex:none;width:16px;display:flex;flex-direction:column;align-items:center;background:linear-gradient(90deg,#8fadd9,#7494c2 30%,#7494c2)}
.vscroll .split{width:14px;height:6px;margin-top:1px;background:#fff;border:1px solid #6b8fbe}
.vscroll button{height:20px}
.vscroll .thumb{width:14px;height:24%;min-height:261px;margin-top:60px;border:1px solid #51709c;border-radius:2px;background:linear-gradient(90deg,#dfe8ef,#eef3f7 40%,#a9bbd3);display:flex;align-items:center;justify-content:center}
.vscroll .thumb i{width:9px;height:8px;background:repeating-linear-gradient(#6c7f99 0 1px,transparent 1px 2px)}
.vscroll .end{margin-top:auto}
.hscroll{flex:1;min-width:0;display:flex;align-items:center;margin-left:174px}
.hscroll .split{flex:none;width:7px;height:15px;background:#fff;border:1px solid #6b8fbe}
.hscroll button{width:20px;height:15px}
.hscroll .thumb{flex:0 1 657px;height:14px;border:1px solid #51709c;border-radius:2px;background:linear-gradient(#e9eef3,#d5dee8 45%,#a9b9ce);display:flex;align-items:center;justify-content:center}
.hscroll .thumb i{width:8px;height:8px;background:repeating-linear-gradient(90deg,#6c7f99 0 1px,transparent 1px 2px)}
.hscroll .end{margin-left:auto}

/* sheet tabs */
.sheettabs{flex:none;height:15px;display:flex;padding-right:16px;background:linear-gradient(#a8c4ea,#7494c2);overflow:hidden}
.nav{width:62px;display:flex;justify-content:space-around;background:#cfe0f6;padding:0 1px}
.st{position:relative;padding:0 10px;font:11px/15px "Liberation Mono",monospace;background:#bcd3f0;color:#15428b}
.st::before{content:"";position:absolute;left:0;top:0;width:1px;height:15px;background:#6a86ae;transform:skewX(-32deg)}
.st .han{font-size:13px;line-height:15px}
.st.w{padding:0 9px}
.st.on{width:45px;padding:0;background:#fff;font:14px/15px "Noto Sans CJK SC",sans-serif}
.st.on::before{display:none}
.st.new{padding:0 8px}

/* status bar */
.status{flex:none;height:23px;display:flex;align-items:center;border-top:1px solid #7e9ecb;background:linear-gradient(#e5effc,#c6dbf6 30%,#b6d0f3 50%,#d5e5fa 80%,#cfe2fb);border-bottom:1px solid #5f7c9f}
.ready{width:41px;padding-left:7px;line-height:21px;border-right:1px solid #a3bfe6}
.viewbar{margin-left:auto;height:21px;padding:0 6px 0 5px;display:flex;align-items:center;border-left:1px solid #6b8fbe;background:linear-gradient(#bfd5f3,#8fb3e3)}
.views{display:flex;border:1px solid #7d9cc8;border-radius:2px}
.views button{width:18px;height:17px;background:#cdddf3}
.views .on{background:linear-gradient(#f6dca2,#fbc45b)}
.pct{width:50px;text-align:center;color:#15305e}
.viewbar input{appearance:none;width:101px;height:16px;background:linear-gradient(#5d7ba8,#5d7ba8) center/100% 1px no-repeat}
.viewbar input::-webkit-slider-thumb{appearance:none;width:9px;height:13px;border:1px solid #46597a;border-radius:1px 1px 4px 4px;background:#dce8f8}

/* taskbar */
.taskbar{flex:none;height:39px;display:flex;align-items:stretch;gap:4px;padding:1px 0 0 7px;border-top:1px solid #000;background:linear-gradient(65deg,transparent 64%,#1b3f6e 65%,#1b3f6e 70%,transparent 71%),linear-gradient(90deg,#0a2040,#0d2a55 30%,#0e3161 45%,#06295a 60%,#0a2b58 85%,#0f2440)}
.start{width:40px;margin-right:9px}
.app{width:58px;border:1px solid #95a6be;border-radius:3px;background:linear-gradient(135deg,#7286a4,#2c4a75 45%,#1d3d6b)}
.multi{width:51px;margin-right:7px;box-shadow:3px 0 0 -1px #1d3d6b,4px 0 0 -1px #95a6be,6px 0 0 -1px #1d3d6b,7px 0 0 -1px #95a6be}
.active{background:linear-gradient(135deg,#e3e8ee,#a5b2c4 50%,#8d9fb8)}
.tray{margin-left:auto;display:flex;align-items:center;gap:8px;color:#fff}
.tray time{width:74px;text-align:center;line-height:18px}
.peek{width:12px;border:1px solid #6b7c93;background:linear-gradient(135deg,#5a6a80,#0f2440 60%)}
```
FILE: sheet.js
```js
const columns = [['', 34], ['A', 58], ['B', 39], ['C', 121], ['D', 66], ['E', 81], ['F', 54], ['G', 49], ['H', 89], ['I', 150], ['J', 103],
  ...'KLMNOPQRSTUVW'.split('').map(c => [c, 72]), ['X', 44], ['AA', 72], ['', 30]];
const rows = [
  { n: 10, no: 3, text: '无要求时，PTH公差+/-3mil，过孔公差+3/-∞mil，NPTH公差+/-2mil', side: 'CAM<br>指示', span: 13, cls: 'cam' },
  { n: 11, no: 4, text: '贴片焊盘间距不足的，按参考板制作' },
  { n: 12, no: 5, text: 'BGA到线间距不足，按参考板制作' },
  { n: 13, no: 6, text: '不允许删除内层孤立焊盘；允许添加泪滴', hot: 1 },
  { n: 14, no: 7, text: '允许不保证过孔与SMT之间的阻焊桥', hot: 1 },
  { n: 15, no: 8, text: '类似附图贴片焊盘设计独立开窗无阻焊桥的，允许削开窗，保证阻焊桥', hot: 1, fig: 2 },
  { n: 16, no: 9, text: 'edge-pl层为包边区域，桥连邮票孔位置不做包边，并按附图添加部分桥连，桥连位置不做包边，非包边\n区域极限削铜，按不露铜制作', fig: 3 },
  { n: 17, no: 10, text: '类似附图字符的小间隙，填实制作', hot: 1, fig: 4 },
  { n: 18, no: 11, text: '树脂塞孔，外层线距不足，允许将外层3.94mil的线宽改为3.5mil（注意差分阻抗线宽按阻抗单中调整）' },
  { n: 19, no: 12, text: '孔铜平均20um，最小18um，如果与客观要求不一致，以预审指示为准' },
  { n: 20, no: 13, text: '过孔工艺：0.15mm（注意只有焊盘对应为0.32mm的），0.2mm，0.3mm，0.4mm的孔，树脂塞孔并电镀镀\n平，如设计开窗，需保留开窗制作；其他过孔不塞孔，设计单面开窗的也不做阻焊塞孔，接受油墨入孔及\n有咬蚀孔铜风险', h: 73 },
  { n: 21, no: 14, text: '附图区域需要做包边，按参考板制作', fig: 5 },
  { n: 22, no: 15, text: '' },
  { n: 23, no: 10, text: '', side: '工序<br>指示', span: 3, cls: '' },
  { n: 24, no: 2, text: '' },
  { n: 25, no: 3, text: '' }
];
const blank = k => '<td></td>'.repeat(k);
// Half-width runs are set in the monospaced face.
const mark = s => s.replace(/[!-~]+/g, '<span class="lat">$&</span>').replace(/\n/g, '<br>');

document.getElementById('cols').innerHTML = columns.map(c => `<col style="width:${c[1]}px">`).join('');
document.getElementById('heads').innerHTML = columns.map((c, i) => `<th${i ? '' : ' class="corner"'}>${c[0]}</th>`).join('');

let html = rows.map(r => `<tr style="height:${r.h || 37}px"><th>${r.n}</th>` +
  (r.side ? `<td class="side ${r.cls}" rowspan="${r.span}">${r.side}</td>` : '') +
  `<td class="no">${r.no}</td><td class="txt${r.hot ? ' hot' : ''}" colspan="7">${mark(r.text)}</td>` +
  `<td class="ref">${r.fig ? `<a href="#fig${r.fig}"><span class="han">图</span>${r.fig}(fig${r.fig})’</a>` : ''}</td>${blank(16)}</tr>`).join('');
for (let n = 26; n < 33; n++) html += `<tr style="height:19px"><th>${n}</th>${blank(26)}</tr>`;
document.getElementById('rows').innerHTML = html;
```
